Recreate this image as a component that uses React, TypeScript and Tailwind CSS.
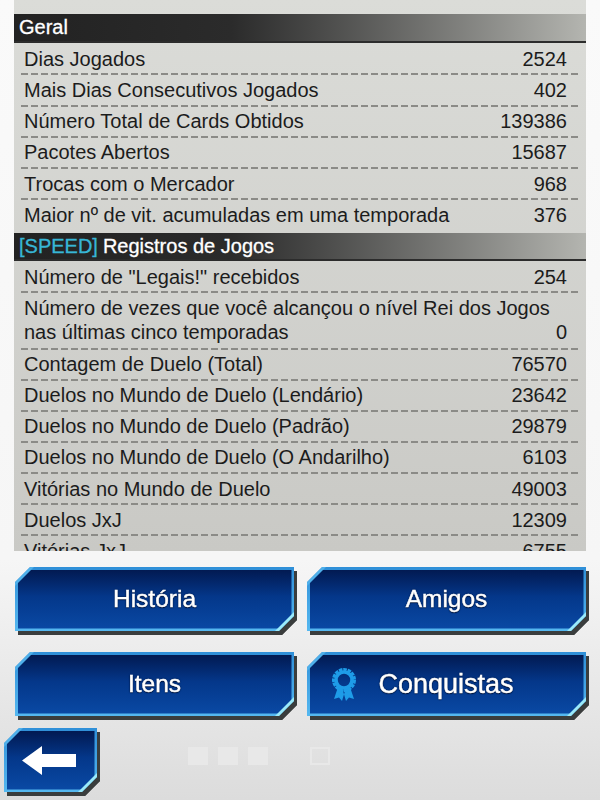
const font = { fontFamily: '"Liberation Sans", Arial, sans-serif' };

const dash =
  "bg-[repeating-linear-gradient(90deg,#8b8b87_0,#8b8b87_7px,transparent_7px,transparent_10px)] bg-no-repeat bg-bottom bg-[length:100%_2px]";

function Row({ label, value, last, tall }: { label: React.ReactNode; value: string; last?: boolean; tall?: boolean }) {
  return (
    <div className={`mx-[7px] pl-[3px] pr-[12px] pb-[2px] flex items-center justify-between ${tall ? "h-[31.1px]" : "h-[31.25px]"} ${last ? "" : dash}`}>
      <span>{label}</span>
      <span>{value}</span>
    </div>
  );
}

function Header({ children }: { children: React.ReactNode }) {
  return (
    <div className="h-[28.5px] flex items-center pl-[5px] text-[20px] text-white bg-gradient-to-r from-[#222222] via-[#2b2b2b] via-38% to-[#b4b5b0] border-b-2 border-[#2c2c2c] [-webkit-text-stroke:0.3px_#ffffff]">
      {children}
    </div>
  );
}

function Button({ children, className }: { children: React.ReactNode; className: string }) {
  return (
    <div className={`relative drop-shadow-[3px_4px_0_#3a3d3d] ${className}`}>
      <div className="h-full [clip-path:polygon(15px_0,100%_0,100%_calc(100%-15px),calc(100%-15px)_100%,0_100%,0_15px)] bg-gradient-to-b from-[#2f8fd8] to-[#55b8f0] p-[2.5px] relative">
        <div className="h-full flex items-center justify-center text-white text-[24.5px] bg-gradient-to-b from-[#021a52] via-[#04378a] via-45% to-[#0a49a4] [clip-path:polygon(13px_0,100%_0,100%_calc(100%-13px),calc(100%-13px)_100%,0_100%,0_13px)] [-webkit-text-stroke:0.45px_#ffffff] [text-shadow:0_0_2px_#001030,0_1px_1px_#001030]">
          {children}
        </div>
        <div className="absolute right-0 bottom-0 w-[19px] h-[19px] bg-[#9aeafa] [clip-path:polygon(100%_0,100%_24%,24%_100%,0_100%)]" />
        <div className="absolute left-0 top-0 w-[19px] h-[19px] bg-[#4fb0ea] [clip-path:polygon(80%_0,100%_0,0_100%,0_80%)]" />
      </div>
    </div>
  );
}

export default function App() {
  return (
    <div className="relative w-[600px] h-[800px] overflow-hidden bg-gradient-to-b from-[#fafafa] via-[#f6f6f6] via-70% to-[#dcdcdc]" style={font}>
      <div className="mx-[14px] w-[572px] h-[551px] overflow-hidden bg-gradient-to-b from-[#dbdcd8] to-[#c9c9c5] text-[20px] leading-[24px] text-[#1c1c1c] pt-[14px]">
        <Header>Geral</Header>
        <div className="pt-[1.5px]">
          <Row label="Dias Jogados" value="2524" />
          <Row label="Mais Dias Consecutivos Jogados" value="402" />
          <Row label="Número Total de Cards Obtidos" value="139386" />
          <Row label="Pacotes Abertos" value="15687" />
          <Row label="Trocas com o Mercador" value="968" />
          <Row label="Maior nº de vit. acumuladas em uma temporada" value="376" last />
        </div>
        <div className="h-[1px]" />
        <Header><span className="text-[#37b6d6] [-webkit-text-stroke:0.3px_#37b6d6] mr-[5px]">[SPEED]</span>Registros de Jogos</Header>
        <div className="pt-[1px]">
          <Row label={'Número de "Legais!" recebidos'} value="254" tall />
          <div className={`mx-[7px] pl-[3px] pr-[12px] pt-[2.5px] h-[56.5px] ${dash}`}>
            <div>Número de vezes que você alcançou o nível Rei dos Jogos</div>
            <div className="flex justify-between"><span>nas últimas cinco temporadas</span><span>0</span></div>
          </div>
          <Row label="Contagem de Duelo (Total)" value="76570" tall />
          <Row label="Duelos no Mundo de Duelo (Lendário)" value="23642" tall />
          <Row label="Duelos no Mundo de Duelo (Padrão)" value="29879" tall />
          <Row label="Duelos no Mundo de Duelo (O Andarilho)" value="6103" tall />
          <Row label="Vitórias no Mundo de Duelo" value="49003" tall />
          <Row label="Duelos JxJ" value="12309" tall />
          <Row label="Vitórias JxJ" value="6755" tall last />
        </div>
      </div>

      <div className="grid grid-cols-[279px_279px] gap-x-[13px] gap-y-[21px] pl-[15px] pt-[16px]">
        <Button className="h-[64px]">História</Button>
        <Button className="h-[64px]">Amigos</Button>
        <Button className="h-[64px]">Itens</Button>
        <Button className="h-[64px]">
          <span className="flex items-center w-full pl-[22px] text-[27px]">
            <svg width="24" height="33" viewBox="0 0 24 33" className="mr-[23px] shrink-0">
              <path d="M6 19 L2 31 L7 29.5 L10 33 L13 23 Z M18 19 L22 31 L17 29.5 L14 33 L11 23 Z" fill="#1e9ce8" />
              <circle cx="12" cy="12" r="10.5" fill="none" stroke="#1e9ce8" strokeWidth="3" strokeDasharray="3.6 0.8" />
              <circle cx="12" cy="12" r="8" fill="none" stroke="#1e9ce8" strokeWidth="3.6" />
            </svg>
            Conquistas
          </span>
        </Button>
      </div>

      <div className="pl-[4px] pt-[12px]">
        <Button className="w-[93px] h-[64px]">
          <svg width="54" height="29" viewBox="0 0 54 29" className="mr-[3px]">
            <path d="M0 14.5 L20 0 L20 8 L54 8 L54 21 L20 21 L20 29 Z" fill="#ffffff" />
          </svg>
        </Button>
      </div>

      <div className="absolute left-[188px] top-[747px] flex gap-[10px]">
        <div className="w-[20px] h-[18px] bg-[#e8e8e8]" />
        <div className="w-[20px] h-[18px] bg-[#e8e8e8]" />
        <div className="w-[20px] h-[18px] bg-[#e8e8e8]" />
      </div>
      <div className="absolute left-[310px] top-[747px] w-[20px] h-[18px] border-2 border-[#e8e8e8]" />
    </div>
  );
}
